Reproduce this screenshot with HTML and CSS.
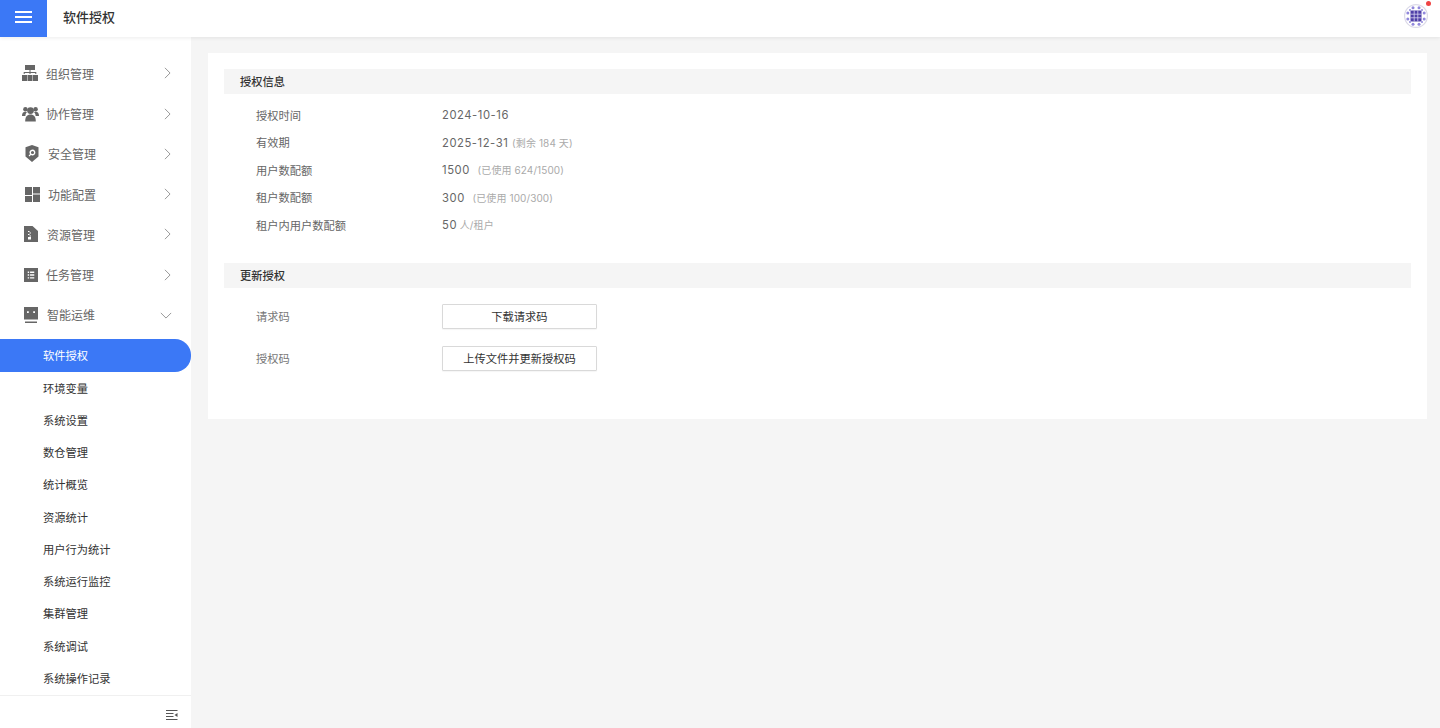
FILE: index.html
```html
<!DOCTYPE html>
<html lang="zh">
<head>
<meta charset="utf-8">
<title>软件授权</title>
<link rel="stylesheet" href="styles.css">
</head>
<body>
<div class="app">
  <header class="topbar">
    <button class="burger" aria-label="菜单"><span></span><span></span><span></span></button>
    <h1 class="page-title">软件授权</h1>
    <div class="avatar">
      <svg viewBox="0 0 24 24" width="24" height="24">
        <circle cx="12" cy="12" r="11.400" fill="#fff" stroke="#dcdae8" stroke-width="1.200"/>
        <g fill="#9188dc">
          <circle cx="9" cy="3.800" r="1.500"/><circle cx="15" cy="3.800" r="1.500"/>
          <circle cx="9" cy="20.200" r="1.500"/><circle cx="15" cy="20.200" r="1.500"/>
          <circle cx="3.800" cy="9" r="1.500"/><circle cx="3.800" cy="15" r="1.500"/>
          <circle cx="20.200" cy="9" r="1.500"/><circle cx="20.200" cy="15" r="1.500"/>
          <circle cx="6" cy="6" r="1"/><circle cx="18" cy="6" r="1"/><circle cx="6" cy="18" r="1"/><circle cx="18" cy="18" r="1"/>
        </g>
        <rect x="6.500" y="6.500" width="11" height="11" rx="1" fill="#4f3fa8"/>
        <path d="M10.200 6.500v11M13.800 6.500v11M6.500 10.200h11M6.500 13.800h11" stroke="#d8d4f0" stroke-width=".8"/>
      </svg>
      <i class="dot"></i>
    </div>
  </header>
  <div class="body">
    <aside class="sidebar">
      <nav class="menu">
        <a class="group g1"><svg class="ico" viewBox="0 0 16 16"><path d="M3 0h10v5H3zM7.500 5h1v2h5.800v2h-1V8H8.500v1h-1V8H2.700v1h-1V7h5.800z"/><path d="M0 10h5v6H0zM5.500 10h5v6h-5zM11 10h5v6h-5z"/></svg><span class="lbl">组织管理</span><svg class="chev" viewBox="0 0 8 14"><path d="M1 1l6 6-6 6"/></svg></a>
        <a class="group g2"><svg class="ico" viewBox="0 0 16 16"><circle cx="3.200" cy="4" r="2.100"/><circle cx="12.800" cy="4" r="2.100"/><path d="M0 10c0-2.500 1.200-3.700 3-3.700 1 0 1.400.3 1.700.6-1 .9-1.500 2-1.500 3.400H0zM16 10c0-2.500-1.200-3.700-3-3.700-1 0-1.400.3-1.700.6 1 .9 1.500 2 1.500 3.400H16z"/><circle cx="8" cy="5.200" r="3.200"/><path d="M3 15.500c0-4.500 1.800-6.500 5-6.500s5 2 5 6.500z"/></svg><span class="lbl">协作管理</span><svg class="chev" viewBox="0 0 8 14"><path d="M1 1l6 6-6 6"/></svg></a>
        <a class="group g3"><svg class="ico" viewBox="0 0 14 17"><path fill-rule="evenodd" d="M7 0l6.500 2.200v9.300L7 17 .5 11.500V2.200zM7.500 4.500a3 3 0 0 0-2.500 4.700L3.600 10.600l.9.900L5.900 10.100A3 3 0 1 0 7.500 4.500zm0 1.400a1.600 1.600 0 1 1 0 3.200 1.600 1.600 0 0 1 0-3.200z"/></svg><span class="lbl">安全管理</span><svg class="chev" viewBox="0 0 8 14"><path d="M1 1l6 6-6 6"/></svg></a>
        <a class="group g4"><svg class="ico" viewBox="0 0 15 15"><path d="M0 0h7v8H0zM8 0h7v6.500H8zM0 9h7v6H0zM8 7.500h7V15H8z"/></svg><span class="lbl">功能配置</span><svg class="chev" viewBox="0 0 8 14"><path d="M1 1l6 6-6 6"/></svg></a>
        <a class="group g5"><svg class="ico" viewBox="0 0 14 16"><path fill-rule="evenodd" d="M0 0h8.500L14 5v11H0zM4 5v1h1.500V5zM5.500 6.500v1H7v-1zM4 8v1h1.500V8zM5.500 9.500v1H7v-1zM4 11v2.500h3V11z"/></svg><span class="lbl">资源管理</span><svg class="chev" viewBox="0 0 8 14"><path d="M1 1l6 6-6 6"/></svg></a>
        <a class="group g6"><svg class="ico" viewBox="0 0 15 15"><path fill-rule="evenodd" d="M0 0h15v15H0zM4 3.800v1.500h1.500V3.800zM6.500 3.800v1.500H11V3.800zM4 6.800v1.500h1.500V6.800zM6.500 6.800v1.500H11V6.800zM4 9.800v1.500h1.500V9.800zM6.500 9.800v1.500H11V9.800z"/></svg><span class="lbl">任务管理</span><svg class="chev" viewBox="0 0 8 14"><path d="M1 1l6 6-6 6"/></svg></a>
        <a class="group g7"><svg class="ico" viewBox="0 0 14 16"><path fill-rule="evenodd" d="M0 0h14v12.500H0zM3 4.200v1.800h1.800V4.200zM9.200 4.200v1.800H11V4.200z"/><path d="M1 14.500h12V16H1z"/></svg><span class="lbl">智能运维</span><svg class="chev chev-down" viewBox="0 0 14 8"><path d="M1 1l6 6 6-6"/></svg></a>
        <a class="item active">软件授权</a>
        <a class="item">环境变量</a>
        <a class="item">系统设置</a>
        <a class="item">数仓管理</a>
        <a class="item">统计概览</a>
        <a class="item">资源统计</a>
        <a class="item">用户行为统计</a>
        <a class="item">系统运行监控</a>
        <a class="item">集群管理</a>
        <a class="item">系统调试</a>
        <a class="item">系统操作记录</a>
      </nav>
      <div class="collapse">
        <svg viewBox="0 0 12 10" width="12" height="10"><path d="M0 .5h11.500M0 3.500h7.500M0 6.500h7.500M0 9.500h11.500" stroke="#555" fill="none"/><path d="M8.500 5l3-2v4z" fill="#555"/></svg>
      </div>
    </aside>
    <main class="content">
      <section class="card">
        <h2 class="sec">授权信息</h2>
        <dl class="info">
          <div class="row"><dt>授权时间</dt><dd>2024-10-16</dd></div>
          <div class="row"><dt>有效期</dt><dd>2025-12-31 <small>(剩余 184 天)</small></dd></div>
          <div class="row"><dt>用户数配额</dt><dd>1500 <small class="gap">(已使用 624/1500)</small></dd></div>
          <div class="row"><dt>租户数配额</dt><dd>300 <small class="gap">(已使用 100/300)</small></dd></div>
          <div class="row"><dt>租户内用户数配额</dt><dd>50 <small class="unit">人/租户</small></dd></div>
        </dl>
        <h2 class="sec sec-2">更新授权</h2>
        <div class="actions">
          <div class="act"><span class="act-label">请求码</span><button class="btn">下载请求码</button></div>
          <div class="act"><span class="act-label">授权码</span><button class="btn">上传文件并更新授权码</button></div>
        </div>
      </section>
    </main>
  </div>
</div>
</body>
</html>
```
FILE: styles.css
```css
* { box-sizing: border-box; margin: 0; padding: 0; }
html, body { height: 100%; overflow: hidden; }
body {
  font-family: "Noto Sans CJK SC", "Liberation Sans", sans-serif;
  background: #f5f5f5;
  color: #333;
}
.app { display: flex; flex-direction: column; height: 728px; }
.topbar {
  position: relative;
  z-index: 2;
  flex: 0 0 37px;
  display: flex;
  align-items: center;
  background: #fff;
  box-shadow: 0 1px 4px rgba(0, 0, 0, .08);
}
.burger {
  width: 47px;
  height: 37px;
  background: #3b78f6;
  border: 0;
  padding-bottom: 3px;
  display: flex;
  flex-direction: column;
  align-items: center;
  justify-content: center;
  gap: 3.500px;
}
.burger span { display: block; width: 17px; height: 1.500px; background: #fff; }
.page-title { margin-left: 16px; font-size: 13px; font-weight: 500; color: #333; line-height: 33px; height: 37px; }
.avatar { position: relative; margin-left: auto; margin-right: 12px; width: 24px; height: 24px; margin-top: -5px; }
.avatar svg { display: block; }
.dot { position: absolute; right: -3px; top: -3px; width: 5px; height: 5px; border-radius: 50%; background: #ef4444; }
.body { flex: 1; display: flex; min-height: 0; }
.sidebar {
  flex: 0 0 191px;
  display: flex;
  flex-direction: column;
  background: #fff;
}
.menu { flex: 1; padding-top: 16.250px; }
.group {
  display: flex;
  align-items: center;
  height: 40.250px;
  padding-left: 22px;
  font-size: 12px;
  color: #666;
  position: relative;
}
.ico { width: 16px; height: 16px; fill: #666; flex: none; }
.lbl { margin-left: 8px; }
.g2 .ico { width: 17px; height: 17px; }
.g2 .lbl { margin-left: 7px; }
.g3 { padding-left: 25px; }
.g3 .ico { width: 14px; height: 17px; }
.g3 .lbl { margin-left: 9px; }
.g4 { padding-left: 25px; }
.g4 .ico { width: 15px; height: 15px; }
.g5 { padding-left: 24px; }
.g5 .ico { width: 14px; height: 16px; }
.g5 .lbl { margin-left: 9px; }
.g6 { padding-left: 24px; }
.g6 .ico { width: 14px; height: 14px; }
.g7 { padding-left: 24px; margin-bottom: 4.250px; }
.g7 .ico { width: 14px; height: 16px; }
.g7 .lbl { margin-left: 9px; }
.chev { position: absolute; right: 20px; top: 50%; margin-top: -6px; width: 7px; height: 12px; fill: none; stroke: #888; stroke-width: 1; }
.chev-down { right: 19px; margin-top: -3px; width: 12px; height: 7px; }
.item {
  display: flex;
  align-items: center;
  height: 32.250px;
  padding-left: 43px;
  font-size: 11.250px;
  color: #333;
}
.item.active {
  background: #3b78f6;
  color: #fff;
  border-radius: 0 16px 16px 0;
}
.collapse {
  flex: 0 0 33px;
  border-top: 1px solid #f0f0f0;
  padding-top: 6px;
  display: flex;
  align-items: center;
  justify-content: flex-end;
  padding-right: 13px;
}
.content { flex: 1; padding: 16px 13px 0 17px; min-width: 0; }
.card { background: #fff; height: 366px; padding: 16px 16px 0; }
.sec {
  height: 24.500px;
  background: #f5f5f5;
  padding-left: 16px;
  font-size: 11.250px;
  font-weight: 500;
  line-height: 24.500px;
  color: #333;
}
.sec-2 { margin-top: 24.500px; }
.info { padding-top: 7.500px; }
.row { display: flex; align-items: center; height: 27.500px; padding-left: 32px; }
.row dt { width: 186px; font-size: 11.250px; color: #666; }
.row dd { font-size: 11.250px; color: #666; letter-spacing: .55px; font-family: "Inter", "Noto Sans CJK SC", sans-serif; }
.row small { font-size: 10px; color: #aaa; letter-spacing: .1px; }
.row small.gap { margin-left: 4px; }
.row small.unit { margin-left: -1px; }
.actions { padding-top: 16px; display: flex; flex-direction: column; gap: 16.500px; }
.act { display: flex; align-items: center; padding-left: 32px; }
.act-label { width: 186px; font-size: 11.250px; color: #777; }
.btn {
  width: 155px;
  height: 25.500px;
  background: #fff;
  border: 1px solid #d9d9d9;
  border-radius: 1px;
  font-family: inherit;
  font-size: 11.250px;
  color: #333;
  box-shadow: 0 1px 1px rgba(0, 0, 0, .04);
}
```
